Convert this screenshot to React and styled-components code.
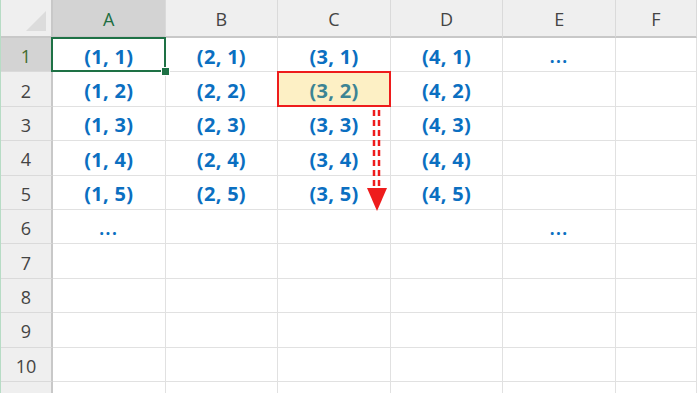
import React from "react";
import styled, { createGlobalStyle } from "styled-components";

const GlobalStyle = createGlobalStyle`
  html, body {
    margin: 0;
    padding: 0;
    background: #ffffff;
  }
  body {
    font-family: "Open Sans", "Noto Sans", sans-serif;
  }
`;

const COLS = ["A", "B", "C", "D", "E", "F"];
const ROWS = 10;

const Sheet = styled.div`
  position: relative;
  width: 697px;
  height: 393px;
  overflow: hidden;
  display: grid;
  grid-template-columns: 52px repeat(5, 112.6px) 1fr;
  grid-template-rows: 38px repeat(${ROWS}, 34.4px) 1fr;
  border-left: 1px solid #b7dcc5;
  box-sizing: border-box;
`;

const Corner = styled.div`
  position: relative;
  background: #efefef;
  border-right: 2px solid #c8c8c8;
  border-bottom: 2px solid #c8c8c8;
  box-sizing: border-box;

  &::after {
    content: "";
    position: absolute;
    right: 5px;
    bottom: 5px;
    width: 0;
    height: 0;
    border-left: 20px solid transparent;
    border-bottom: 20px solid #dcdcdc;
  }
`;

const ColHead = styled.div`
  display: flex;
  align-items: center;
  justify-content: center;
  padding-top: 2px;
  background: ${(p) => (p.$active ? "#d3d3d3" : "#efefef")};
  color: ${(p) => (p.$active ? "#1e6e42" : "#444444")};
  border-right: 1px solid #dadada;
  border-bottom: 2px solid #c8c8c8;
  box-sizing: border-box;
  font-size: 18px;
`;

const RowHead = styled.div`
  display: flex;
  align-items: center;
  justify-content: center;
  padding-top: 3px;
  background: ${(p) => (p.$active ? "#d3d3d3" : "#efefef")};
  color: ${(p) => (p.$active ? "#3f6b2c" : "#444444")};
  border-right: 2px solid #c8c8c8;
  border-bottom: 1px solid #dadada;
  box-sizing: border-box;
  font-size: 18px;
`;

const Cell = styled.div`
  position: relative;
  display: flex;
  align-items: center;
  justify-content: center;
  padding-top: 3px;
  background: ${(p) => (p.$marked ? "#fdf0c5" : "#ffffff")};
  color: ${(p) => (p.$marked ? "#3c8494" : "#0b6fc1")};
  border-right: 1px solid #e1e1e1;
  border-bottom: 1px solid #e1e1e1;
  box-sizing: border-box;
  font-size: 20px;
  font-weight: 700;
  letter-spacing: 0.3px;

  ${(p) =>
    p.$selected &&
    `
    &::after {
      content: "";
      position: absolute;
      left: -2px;
      top: -1px;
      right: -1px;
      bottom: -1px;
      border: 2.5px solid #1e7145;
      z-index: 2;
    }
  `}

  ${(p) =>
    p.$marked &&
    `
    &::after {
      content: "";
      position: absolute;
      left: -1px;
      top: -1px;
      right: -1px;
      bottom: -1px;
      border: 2px solid #ee1c1c;
      z-index: 2;
    }
  `}
`;

const Handle = styled.span`
  position: absolute;
  right: -5px;
  bottom: -5px;
  width: 7px;
  height: 7px;
  background: #1e7145;
  border: 1px solid #ffffff;
  z-index: 3;
`;

const Dots = styled.span`
  font-size: 17px;
  letter-spacing: 1.5px;
`;

const Arrow = styled.svg`
  position: absolute;
  left: 365px;
  top: 110px;
  z-index: 4;
`;

const Filler = styled.div`
  border-right: 1px solid #e1e1e1;
  box-sizing: border-box;
  background: ${(p) => (p.$head ? "#efefef" : "#ffffff")};
  ${(p) => p.$head && "border-right: 2px solid #c8c8c8;"}
`;

function content(col, row) {
  if (col < 4 && row < 5) return `(${col + 1}, ${row + 1})`;
  if ((col === 0 && row === 5) || (col === 4 && row === 5)) return "dots";
  if (col === 4 && row === 0) return "dots";
  return "";
}

export default function App() {
  return (
    <>
      <GlobalStyle />
      <Sheet>
        <Corner />
        {COLS.map((c, i) => (
          <ColHead key={c} $active={i === 0}>
            {c}
          </ColHead>
        ))}
        {Array.from({ length: ROWS }).map((_, r) => (
          <React.Fragment key={r}>
            <RowHead $active={r === 0}>{r + 1}</RowHead>
            {COLS.map((c, ci) => {
              const text = content(ci, r);
              const selected = ci === 0 && r === 0;
              const marked = ci === 2 && r === 1;
              return (
                <Cell key={c} $selected={selected} $marked={marked}>
                  {text === "dots" ? <Dots>...</Dots> : text}
                  {selected && <Handle />}
                </Cell>
              );
            })}
          </React.Fragment>
        ))}
        <Filler $head />
        {COLS.map((c) => (
          <Filler key={c} />
        ))}
        <Arrow width="22" height="102" viewBox="0 0 22 102">
          <line
            x1="8"
            y1="0"
            x2="8"
            y2="80"
            stroke="#ee1c1c"
            strokeWidth="2.5"
            strokeDasharray="6 4"
          />
          <line
            x1="13"
            y1="0"
            x2="13"
            y2="80"
            stroke="#ee1c1c"
            strokeWidth="2.5"
            strokeDasharray="6 4"
          />
          <polygon points="1,78 21,78 11,101" fill="#ee1c1c" />
        </Arrow>
      </Sheet>
    </>
  );
}
